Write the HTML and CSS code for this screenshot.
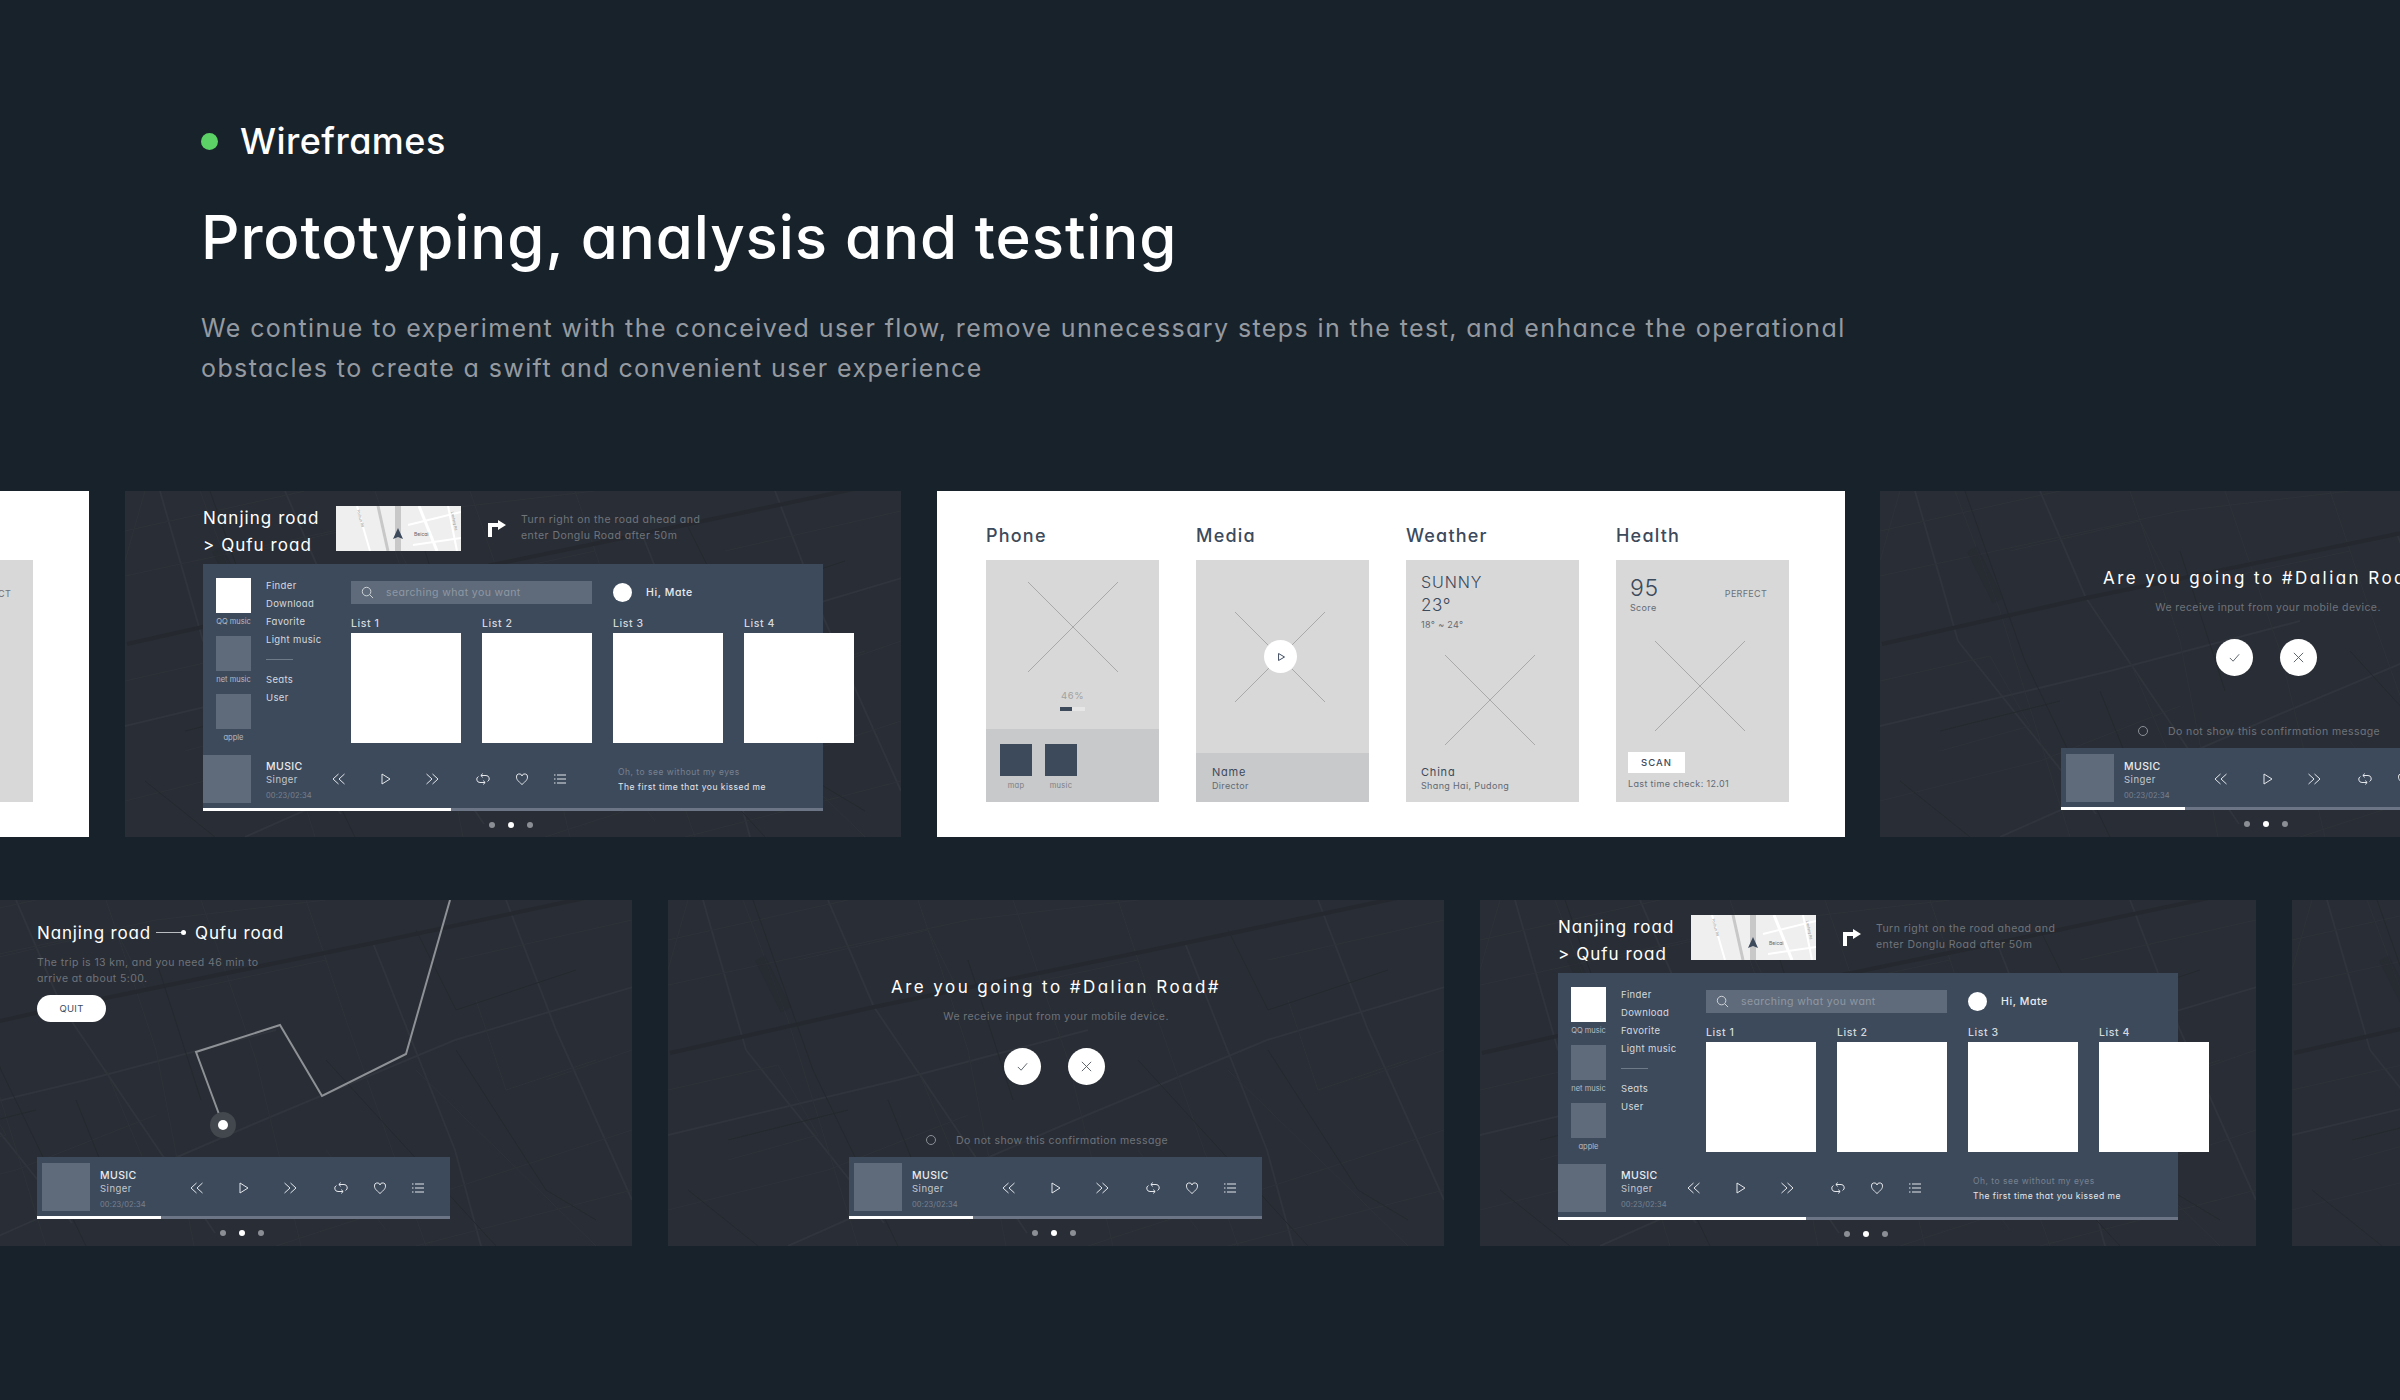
FILE: index.html
```html
<!DOCTYPE html>
<html>
<head>
	<title>Wireframes</title>
	<meta http-equiv="content-type" content="text/html; charset=utf-8" />
	<link rel="stylesheet" href="styles.css">
</head>
<body>

<svg class="defs" width="0" height="0">
	<symbol id="city" viewBox="0 0 776 346">
		<g fill="none" stroke="#30343c" stroke-width="2">
			<path d="M517 43 L599 250 L625 346" />
			<path d="M777 87 L599 140 L400 223 L298 267 L120 346" />
			<path d="M206 107 L359 333" />
			<path d="M78 150 L216 323" />
			<path d="M35 0 L78 150" />
			<path d="M160 0 L206 107" />
			<path d="M0 235 L230 180 L420 130" />
			<path d="M650 0 L700 130 L776 300" />
		</g>
		<g fill="none" stroke="#2e3239" stroke-width="1">
			<path d="M75 0 L120 120 L190 346" />
			<path d="M250 0 L300 150 L338 346" />
			<path d="M345 0 L400 160 L445 346" />
			<path d="M450 0 L490 120 L570 346" />
			<path d="M0 40 L180 0" />
			<path d="M0 85 L300 20 L470 0" />
			<path d="M0 310 L160 270 L300 215" />
			<path d="M420 346 L776 230" />
			<path d="M560 346 L776 290" />
			<path d="M600 60 L776 20" />
			<path d="M560 170 L740 346" />
			<path d="M0 190 L110 165 L150 235 L60 260" />
			<path d="M130 60 L260 30 L290 90" />
			<path d="M330 90 L470 60" />
			<path d="M250 170 L300 290" />
			<path d="M620 100 L650 190 L740 160" />
			<path d="M470 250 L530 330" />
			<path d="M20 0 L0 70" />
			<path d="M690 180 L776 150" />
		</g>
		<g fill="none" stroke="#25292f">
			<path d="M2 153 L206 107 L517 43 L776 -12" stroke-width="4" />
			<path d="M85 0 L145 170 L230 346" stroke-width="1" />
			<path d="M300 60 L345 200" stroke-width="1" />
			<path d="M600 150 L690 290 L740 320" stroke-width="1" />
			<path d="M470 160 L640 346" stroke-width="1" />
			<path d="M60 240 L180 210" stroke-width="1" />
			<path d="M560 30 L600 110 L720 70" stroke-width="1" />
			<path d="M20 290 L90 346" stroke-width="1" />
			<path d="M220 200 L260 300" stroke-width="1" />
			<path d="M92 58 L118 110" stroke-width="11" stroke-opacity="0.4" />
		</g>
	</symbol>
	<symbol id="i-rew" viewBox="0 0 20 20"><path d="M9.5 5 L4 10 L9.5 15 M15.5 5 L10 10 L15.5 15" /></symbol>
	<symbol id="i-play" viewBox="0 0 20 20"><path d="M6 5 L14 10 L6 15 Z" /></symbol>
	<symbol id="i-fwd" viewBox="0 0 20 20"><path d="M4.5 5 L10 10 L4.5 15 M10.5 5 L16 10 L10.5 15" /></symbol>
	<symbol id="i-repeat" viewBox="0 0 20 20"><path d="M8 6.5 H13 a3.2 3.2 0 0 1 1.6 6 M12 13.5 H7 a3.2 3.2 0 0 1 -1.6 -6 M9.8 4.6 L7.8 6.5 L9.8 8.4 M10.2 11.6 L12.2 13.5 L10.2 15.4" /></symbol>
	<symbol id="i-heart" viewBox="0 0 20 20"><path d="M10 15.5 C6 12 4.5 10.5 4.5 8 A2.8 2.8 0 0 1 10 7 A2.8 2.8 0 0 1 15.5 8 C15.5 10.5 14 12 10 15.5 Z" /></symbol>
	<symbol id="i-list" viewBox="0 0 20 20"><path d="M7 6 H16 M7 10 H16 M7 14 H16 M4 6 H5.5 M4 10 H5.5 M4 14 H5.5" /></symbol>
	<symbol id="i-cross" viewBox="0 0 90 90"><path d="M0 0 L90 90 M90 0 L0 90" /></symbol>
</svg>

<div class="page">
	<header class="intro">
		<div class="eyebrow"><span class="eyebrow-dot"></span>Wireframes</div>
		<h1>Prototyping, analysis and testing</h1>
		<p class="lead">
			<span>We continue to experiment with the conceived user flow, remove unnecessary steps in the test, and enhance the operational</span>
			<span>obstacles to create a swift and convenient user experience</span>
		</p>
	</header>

	<section class="row row-one">

		<div class="card white-card stub">
			<div class="stub-tile"><span class="perfect">PERFECT</span></div>
		</div>

		<div class="card dark-card">
			<svg class="city"><use href="#city" /></svg>
			<div class="drive-top">
				<div class="road-names">Nanjing road<br>&gt; Qufu road</div>
				<svg class="thumb" viewBox="0 0 125 45">
					<rect width="125" height="45" fill="#efefef" />
					<g fill="none" stroke="#fff">
						<path d="M21 0 L34 45" stroke-width="2" />
						<path d="M83 0 L101 45" stroke-width="3" />
						<path d="M112 0 L121 45" stroke-width="2" />
						<path d="M72 19 L125 6" stroke-width="2" />
						<path d="M77 39 L125 32" stroke-width="2" />
					</g>
					<path d="M42 0 L52 45" stroke="#c8c8c8" stroke-width="3" />
					<path d="M62 0 V45" stroke="#c8c8c8" stroke-width="6" />
					<path d="M62 22 L67 33 L62 31 L57 33 Z" fill="#3c4a5c" />
					<text x="78" y="30" class="thumb-label">Beicai</text>
					<text transform="translate(21 4) rotate(75)" class="thumb-road">Fanhua Rd</text>
					<text transform="translate(115 6) rotate(78)" class="thumb-road">Lanfang Rd</text>
				</svg>
				<svg class="turn" viewBox="0 0 18 18"><path d="M0 17 V3 H10 V0 L18 5 L10 10 V7 H4 V17 Z" fill="#fff" /></svg>
				<p class="turn-text">Turn right on the road ahead and<br>enter Donglu Road after 50m</p>
			</div>
			<div class="panel">
				<div class="panel-top">
					<div class="apps">
						<div class="app active"></div><span>QQ music</span>
						<div class="app"></div><span>net music</span>
						<div class="app"></div><span>apple</span>
					</div>
					<ul class="menu">
						<li>Finder</li>
						<li>Download</li>
						<li>Favorite</li>
						<li>Light music</li>
						<li class="menu-rule"></li>
						<li>Seats</li>
						<li>User</li>
					</ul>
					<div class="browse">
						<div class="browse-head">
							<div class="search">
								<svg class="search-icon" viewBox="0 0 14 14"><circle cx="6" cy="6" r="4.6" /><path d="M9.4 9.4 L13 13" /></svg>
								searching what you want
							</div>
							<span class="avatar"></span>
							<span class="hello">Hi, Mate</span>
						</div>
						<div class="lists">
							<div class="list"><span>List 1</span><div class="list-box"></div></div>
							<div class="list"><span>List 2</span><div class="list-box"></div></div>
							<div class="list"><span>List 3</span><div class="list-box"></div></div>
							<div class="list"><span>List 4</span><div class="list-box"></div></div>
						</div>
					</div>
				</div>
				<div class="player">
					<div class="album"></div>
					<div class="track"><b>MUSIC</b><span>Singer</span><small>00:23/02:34</small></div>
					<div class="controls">
						<svg class="ico"><use href="#i-rew" /></svg>
						<svg class="ico"><use href="#i-play" /></svg>
						<svg class="ico"><use href="#i-fwd" /></svg>
						<svg class="ico"><use href="#i-repeat" /></svg>
						<svg class="ico"><use href="#i-heart" /></svg>
						<svg class="ico"><use href="#i-list" /></svg>
					</div>
					<div class="lyric"><span>Oh, to see without my eyes</span><span class="lyric-now">The first time that you kissed me</span></div>
				</div>
				<div class="progress"><div style="width:40%"></div></div>
			</div>
			<div class="dots"><i></i><i class="on"></i><i></i></div>
		</div>

		<div class="card white-card">
			<div class="screens">
				<div class="screen">
					<h3>Phone</h3>
					<div class="tile">
						<svg class="cross cross-phone"><use href="#i-cross" /></svg>
						<div class="percent">46%</div>
						<div class="loader"><div style="width:48%"></div></div>
						<div class="band band-phone">
							<div class="shortcut"><div></div><span>map</span></div>
							<div class="shortcut"><div></div><span>music</span></div>
						</div>
					</div>
				</div>
				<div class="screen">
					<h3>Media</h3>
					<div class="tile">
						<svg class="cross cross-media"><use href="#i-cross" /></svg>
						<span class="play-btn"><svg viewBox="0 0 20 20"><path d="M6.5 5 L15 10 L6.5 15 Z" /></svg></span>
						<div class="band band-media">
							<div class="t-name">Name</div>
							<div class="t-sub">Director</div>
						</div>
					</div>
				</div>
				<div class="screen">
					<h3>Weather</h3>
					<div class="tile tile-weather">
						<div class="sunny">SUNNY</div>
						<div class="temp">23°</div>
						<div class="t-sub">18° ~ 24°</div>
						<svg class="cross cross-weather"><use href="#i-cross" /></svg>
						<div class="t-name">China</div>
						<div class="t-sub">Shang Hai, Pudong</div>
					</div>
				</div>
				<div class="screen">
					<h3>Health</h3>
					<div class="tile tile-health">
						<div class="score-row">
							<div><div class="score">95</div><div class="t-sub">Score</div></div>
							<span class="perfect">PERFECT</span>
						</div>
						<svg class="cross cross-health"><use href="#i-cross" /></svg>
						<div class="scan">SCAN</div>
						<div class="t-sub check">Last time check: 12.01</div>
					</div>
				</div>
			</div>
		</div>

		<div class="card dark-card confirm">
			<svg class="city"><use href="#city" /></svg>
			<h2>Are you going to #Dalian Road#</h2>
			<p class="confirm-sub">We receive input from your mobile device.</p>
			<div class="answers">
				<span class="answer"><svg viewBox="0 0 14 14"><path d="M2 7.5 L5.5 11 L12 3.5" /></svg></span>
				<span class="answer"><svg viewBox="0 0 14 14"><path d="M2 2 L12 12 M12 2 L2 12" /></svg></span>
			</div>
			<div class="remember"><i></i>Do not show this confirmation message</div>
			<div class="bar">
				<div class="player">
					<div class="album"></div>
					<div class="track"><b>MUSIC</b><span>Singer</span><small>00:23/02:34</small></div>
					<div class="controls">
						<svg class="ico"><use href="#i-rew" /></svg>
						<svg class="ico"><use href="#i-play" /></svg>
						<svg class="ico"><use href="#i-fwd" /></svg>
						<svg class="ico"><use href="#i-repeat" /></svg>
						<svg class="ico"><use href="#i-heart" /></svg>
						<svg class="ico"><use href="#i-list" /></svg>
					</div>
				</div>
				<div class="progress"><div style="width:30%"></div></div>
			</div>
			<div class="dots"><i></i><i class="on"></i><i></i></div>
		</div>
	</section>

	<section class="row row-two">

		<div class="card dark-card trip">
			<svg class="city"><use href="#city" /></svg>
			<svg class="route" viewBox="0 0 776 346">
				<path d="M594 0 L550 154 L466 196 L424 125 L340 152 L367 225" />
			</svg>
			<div class="trip-head">
				<span>Nanjing road</span>
				<span class="trip-link"></span>
				<span>Qufu road</span>
			</div>
			<p class="trip-text">The trip is 13 km, and you need 46 min to<br>arrive at about 5:00.</p>
			<div class="quit">QUIT</div>
			<span class="pin"></span>
			<div class="bar bar-trip">
				<div class="player">
					<div class="album"></div>
					<div class="track"><b>MUSIC</b><span>Singer</span><small>00:23/02:34</small></div>
					<div class="controls">
						<svg class="ico"><use href="#i-rew" /></svg>
						<svg class="ico"><use href="#i-play" /></svg>
						<svg class="ico"><use href="#i-fwd" /></svg>
						<svg class="ico"><use href="#i-repeat" /></svg>
						<svg class="ico"><use href="#i-heart" /></svg>
						<svg class="ico"><use href="#i-list" /></svg>
					</div>
				</div>
				<div class="progress"><div style="width:30%"></div></div>
			</div>
			<div class="dots"><i></i><i class="on"></i><i></i></div>
		</div>

		<div class="card dark-card confirm">
			<svg class="city"><use href="#city" /></svg>
			<h2>Are you going to #Dalian Road#</h2>
			<p class="confirm-sub">We receive input from your mobile device.</p>
			<div class="answers">
				<span class="answer"><svg viewBox="0 0 14 14"><path d="M2 7.5 L5.5 11 L12 3.5" /></svg></span>
				<span class="answer"><svg viewBox="0 0 14 14"><path d="M2 2 L12 12 M12 2 L2 12" /></svg></span>
			</div>
			<div class="remember"><i></i>Do not show this confirmation message</div>
			<div class="bar">
				<div class="player">
					<div class="album"></div>
					<div class="track"><b>MUSIC</b><span>Singer</span><small>00:23/02:34</small></div>
					<div class="controls">
						<svg class="ico"><use href="#i-rew" /></svg>
						<svg class="ico"><use href="#i-play" /></svg>
						<svg class="ico"><use href="#i-fwd" /></svg>
						<svg class="ico"><use href="#i-repeat" /></svg>
						<svg class="ico"><use href="#i-heart" /></svg>
						<svg class="ico"><use href="#i-list" /></svg>
					</div>
				</div>
				<div class="progress"><div style="width:30%"></div></div>
			</div>
			<div class="dots"><i></i><i class="on"></i><i></i></div>
		</div>

		<div class="card dark-card">
			<svg class="city"><use href="#city" /></svg>
			<div class="drive-top">
				<div class="road-names">Nanjing road<br>&gt; Qufu road</div>
				<svg class="thumb" viewBox="0 0 125 45">
					<rect width="125" height="45" fill="#efefef" />
					<g fill="none" stroke="#fff">
						<path d="M21 0 L34 45" stroke-width="2" />
						<path d="M83 0 L101 45" stroke-width="3" />
						<path d="M112 0 L121 45" stroke-width="2" />
						<path d="M72 19 L125 6" stroke-width="2" />
						<path d="M77 39 L125 32" stroke-width="2" />
					</g>
					<path d="M42 0 L52 45" stroke="#c8c8c8" stroke-width="3" />
					<path d="M62 0 V45" stroke="#c8c8c8" stroke-width="6" />
					<path d="M62 22 L67 33 L62 31 L57 33 Z" fill="#3c4a5c" />
					<text x="78" y="30" class="thumb-label">Beicai</text>
					<text transform="translate(21 4) rotate(75)" class="thumb-road">Fanhua Rd</text>
					<text transform="translate(115 6) rotate(78)" class="thumb-road">Lanfang Rd</text>
				</svg>
				<svg class="turn" viewBox="0 0 18 18"><path d="M0 17 V3 H10 V0 L18 5 L10 10 V7 H4 V17 Z" fill="#fff" /></svg>
				<p class="turn-text">Turn right on the road ahead and<br>enter Donglu Road after 50m</p>
			</div>
			<div class="panel">
				<div class="panel-top">
					<div class="apps">
						<div class="app active"></div><span>QQ music</span>
						<div class="app"></div><span>net music</span>
						<div class="app"></div><span>apple</span>
					</div>
					<ul class="menu">
						<li>Finder</li>
						<li>Download</li>
						<li>Favorite</li>
						<li>Light music</li>
						<li class="menu-rule"></li>
						<li>Seats</li>
						<li>User</li>
					</ul>
					<div class="browse">
						<div class="browse-head">
							<div class="search">
								<svg class="search-icon" viewBox="0 0 14 14"><circle cx="6" cy="6" r="4.6" /><path d="M9.4 9.4 L13 13" /></svg>
								searching what you want
							</div>
							<span class="avatar"></span>
							<span class="hello">Hi, Mate</span>
						</div>
						<div class="lists">
							<div class="list"><span>List 1</span><div class="list-box"></div></div>
							<div class="list"><span>List 2</span><div class="list-box"></div></div>
							<div class="list"><span>List 3</span><div class="list-box"></div></div>
							<div class="list"><span>List 4</span><div class="list-box"></div></div>
						</div>
					</div>
				</div>
				<div class="player">
					<div class="album"></div>
					<div class="track"><b>MUSIC</b><span>Singer</span><small>00:23/02:34</small></div>
					<div class="controls">
						<svg class="ico"><use href="#i-rew" /></svg>
						<svg class="ico"><use href="#i-play" /></svg>
						<svg class="ico"><use href="#i-fwd" /></svg>
						<svg class="ico"><use href="#i-repeat" /></svg>
						<svg class="ico"><use href="#i-heart" /></svg>
						<svg class="ico"><use href="#i-list" /></svg>
					</div>
					<div class="lyric"><span>Oh, to see without my eyes</span><span class="lyric-now">The first time that you kissed me</span></div>
				</div>
				<div class="progress"><div style="width:40%"></div></div>
			</div>
			<div class="dots"><i></i><i class="on"></i><i></i></div>
		</div>

		<div class="card dark-card">
			<svg class="city"><use href="#city" /></svg>
		</div>
	</section>
</div>

</body>
</html>
```

FILE: styles.css
```css
* {
	box-sizing: border-box;
}

html, body {
	margin: 0;
	padding: 0;
}

body {
	background: #18222b;
	color: #fff;
	font-family: "Inter", "Liberation Sans", sans-serif;
	font-feature-settings: "cv11" 1;
	overflow: hidden;
}

.defs {
	position: absolute;
}

.page {
	width: 2400px;
	height: 1400px;
	overflow: hidden;
}

h1, h2, h3, p, ul {
	margin: 0;
	padding: 0;
	font-weight: 500;
}

/* intro */
.intro {
	padding: 117px 0 0 201px;
	height: 491px;
}

.eyebrow {
	display: flex;
	align-items: center;
	gap: 22px;
	height: 48px;
	font-size: 36px;
	font-weight: 500;
	letter-spacing: 0.45px;
}

.eyebrow-dot {
	width: 17px;
	height: 17px;
	border-radius: 50%;
	background: #5cd166;
}

h1 {
	margin-top: 34px;
	font-size: 60px;
	line-height: 76px;
	font-weight: 500;
	letter-spacing: 0.9px;
}

.lead {
	margin-top: 33px;
	width: 1644px;
	overflow: hidden;
	font-size: 25px;
	line-height: 40px;
	font-weight: 400;
	letter-spacing: 1.4px;
	color: #959aa1;
}

.lead span {
	display: block;
	white-space: nowrap;
}

/* card rows */
.row {
	display: flex;
	gap: 36px;
	height: 346px;
}

.row-one .confirm {
	margin-left: -1px;
}

.row-two {
	margin: 63px 0 0 -144px;
}

.card {
	flex: none;
	height: 346px;
	overflow: hidden;
}

.dark-card {
	position: relative;
	isolation: isolate;
	width: 776px;
	background: #292d35;
}

.city {
	position: absolute;
	left: 0;
	top: 0;
	width: 776px;
	height: 346px;
	z-index: -1;
	filter: blur(0.6px);
}

.white-card {
	width: 908px;
	background: #fff;
	color: #3c4a5c;
}

/* the end of a white card sticking in at the left edge */
.stub {
	width: 89px;
	padding-top: 69px;
}

.stub-tile {
	display: flex;
	justify-content: flex-end;
	width: 33px;
	height: 242px;
	padding: 27px 22px 0 0;
	overflow: hidden;
	background: #d8d8d8;
}

.perfect {
	flex: none;
	font-size: 9px;
	line-height: 14px;
	letter-spacing: 0.3px;
	color: #6c727a;
}

/* drive card */
.drive-top {
	display: flex;
	height: 45px;
	margin: 15px 0 13px 78px;
}

.road-names {
	width: 133px;
	margin-top: -1px;
	font-size: 17px;
	line-height: 27px;
	font-weight: 400;
	letter-spacing: 1.05px;
	white-space: nowrap;
}

.thumb {
	width: 125px;
	height: 45px;
}

.thumb-label {
	font-size: 5px;
	fill: #666;
	font-family: "Inter", sans-serif;
}

.thumb-road {
	font-size: 3.5px;
	fill: #888;
	font-family: "Inter", sans-serif;
}

.turn {
	width: 18px;
	height: 18px;
	margin: 14px 0 0 27px;
}

.turn-text {
	margin: 6px 0 0 15px;
	font-size: 10.5px;
	line-height: 16px;
	font-weight: 400;
	letter-spacing: 0.45px;
	color: #70757c;
	white-space: nowrap;
}

.panel {
	width: 620px;
	margin-left: 78px;
	background: #3d4a5c;
}

.panel-top {
	display: flex;
	height: 191px;
}

.apps {
	flex: none;
	display: flex;
	flex-direction: column;
	align-items: center;
	width: 35px;
	margin: 14px 0 0 13px;
	font-size: 7.5px;
	line-height: 18px;
	color: #b7bdc5;
	white-space: nowrap;
}

.apps span {
	margin-bottom: 5px;
}

.app {
	flex: none;
	width: 35px;
	height: 35px;
	background: #5f6b7a;
}

.app.active {
	background: #fff;
}

.menu {
	flex: none;
	width: 85px;
	margin: 13px 0 0 15px;
	list-style: none;
	font-size: 9.5px;
	line-height: 18px;
	letter-spacing: 0.35px;
	font-weight: 400;
	color: #d5d9de;
	white-space: nowrap;
}

.menu-rule {
	width: 27px;
	height: 1px;
	margin: 10px 0 11px;
	background: #6f7a89;
}

.browse-head {
	display: flex;
	align-items: center;
	height: 23px;
	margin-top: 17px;
}

.search {
	display: flex;
	align-items: center;
	width: 241px;
	height: 23px;
	padding-left: 10px;
	background: #5f6b7a;
	font-size: 10.5px;
	letter-spacing: 0.4px;
	color: #8f98a4;
	white-space: nowrap;
}

.search-icon {
	width: 13px;
	height: 13px;
	margin-right: 12px;
	fill: none;
	stroke: #d5d9de;
	stroke-width: 1;
}

.avatar {
	width: 19px;
	height: 19px;
	margin-left: 21px;
	border-radius: 50%;
	background: #fff;
}

.hello {
	margin-left: 14px;
	font-size: 10.5px;
	font-weight: 500;
	letter-spacing: 0.6px;
	color: #e9ebee;
	white-space: nowrap;
}

.lists {
	display: flex;
	gap: 21px;
	margin-top: 10px;
}

.list {
	flex: none;
	width: 110px;
	font-size: 10.5px;
	line-height: 19px;
	font-weight: 500;
	letter-spacing: 0.6px;
	color: #d5d9de;
}

.list span {
	display: block;
}

.list-box {
	height: 110px;
	background: #fff;
}

/* player */
.player {
	display: flex;
	height: 48px;
	margin-bottom: 5px;
}

.album {
	flex: none;
	width: 48px;
	height: 48px;
	background: #5f6b7a;
}

.track {
	flex: none;
	display: flex;
	flex-direction: column;
	width: 63px;
	margin-left: 15px;
	padding-top: 5px;
	font-size: 9.5px;
	line-height: 13px;
	letter-spacing: 0.5px;
	color: #c3c8cf;
	white-space: nowrap;
}

.track b {
	font-size: 10.5px;
	font-weight: 500;
	letter-spacing: 0.4px;
	color: #e9ebee;
}

.track small {
	margin-top: 4px;
	font-size: 7.5px;
	line-height: 12px;
	letter-spacing: 0.1px;
	color: #77818f;
}

.controls {
	flex: none;
	display: flex;
	align-items: center;
	height: 48px;
}

.ico {
	width: 20px;
	height: 20px;
	fill: none;
	stroke: #e4e7ea;
	stroke-width: 1;
	margin-left: 27px;
}

.ico:first-child {
	margin-left: 0;
}

.ico:nth-child(2) {
	margin-left: 27px;
}

.ico:nth-child(3) {
	margin-left: 26px;
}

.ico:nth-child(4) {
	margin-left: 31px;
}

.ico:nth-child(5) {
	margin-left: 19px;
}

.ico:nth-child(6) {
	margin-left: 18px;
}

.lyric {
	display: flex;
	flex-direction: column;
	margin: 10px 0 0 48px;
	font-size: 8.5px;
	line-height: 15px;
	letter-spacing: 0.5px;
	color: #77818f;
	white-space: nowrap;
}

.lyric-now {
	color: #e4e7ea;
}

.progress {
	height: 3px;
	background: #6b7585;
}

.progress div {
	height: 3px;
	background: #fff;
}

.dots {
	display: flex;
	gap: 13px;
	margin: 11px 0 0 364px;
}

.dots i {
	width: 6px;
	height: 6px;
	border-radius: 50%;
	background: #8b8f95;
}

.dots i.on {
	background: #fff;
}

/* confirm card */
.confirm {
	padding-top: 74px;
}

.confirm h2 {
	font-size: 17px;
	line-height: 27px;
	font-weight: 400;
	letter-spacing: 2.45px;
	text-align: center;
}

.confirm-sub {
	margin-top: 8px;
	font-size: 10.5px;
	line-height: 16px;
	font-weight: 400;
	letter-spacing: 0.4px;
	text-align: center;
	color: #6f747b;
}

.answers {
	display: flex;
	gap: 27px;
	margin: 23px 0 0 336px;
}

.answer {
	display: flex;
	align-items: center;
	justify-content: center;
	width: 37px;
	height: 37px;
	border-radius: 50%;
	background: #fff;
}

.answer svg {
	width: 13px;
	height: 13px;
	fill: none;
	stroke: #555c66;
	stroke-width: 1;
}

.remember {
	display: flex;
	align-items: center;
	height: 14px;
	margin: 48px 0 0 258px;
	font-size: 10.5px;
	letter-spacing: 0.4px;
	color: #6f747b;
	white-space: nowrap;
}

.remember i {
	width: 10px;
	height: 10px;
	margin-right: 20px;
	border: 1.5px solid #8b8f95;
	border-radius: 50%;
}

.bar {
	width: 413px;
	margin: 10px 0 0 181px;
	padding-top: 6px;
	background: #3d4a5c;
}

.bar .album {
	margin-left: 5px;
}

.bar .track {
	width: 87px;
	margin-left: 10px;
	padding-top: 6px;
}

.bar .controls {
	padding-top: 2px;
}

/* trip card */
.route {
	position: absolute;
	left: 0;
	top: 0;
	width: 776px;
	height: 346px;
	fill: none;
	stroke: #8e9296;
	stroke-width: 2;
}

.trip-head {
	display: flex;
	align-items: center;
	height: 27px;
	margin: 19px 0 0 181px;
	font-size: 17px;
	font-weight: 400;
	letter-spacing: 0.85px;
}

.trip-link {
	position: relative;
	width: 30px;
	height: 1px;
	margin: 0 9px 0 5px;
	background: #b9bcc0;
}

.trip-link::after {
	content: "";
	position: absolute;
	right: 0;
	top: -2px;
	width: 5px;
	height: 5px;
	border-radius: 50%;
	background: #fff;
}

.trip-text {
	position: relative;
	margin: 9px 0 0 181px;
	font-size: 10.5px;
	line-height: 16px;
	font-weight: 400;
	letter-spacing: 0.4px;
	color: #6f747b;
}

.quit {
	position: relative;
	width: 69px;
	height: 27px;
	margin: 8px 0 0 181px;
	border-radius: 14px;
	background: #fff;
	color: #3c4a5c;
	font-size: 9.5px;
	line-height: 27px;
	letter-spacing: 0.3px;
	text-align: center;
}

.pin {
	position: absolute;
	left: 354px;
	top: 212px;
	width: 26px;
	height: 26px;
	border-radius: 50%;
	background: #43474e;
}

.pin::after {
	content: "";
	position: absolute;
	left: 8px;
	top: 8px;
	width: 10px;
	height: 10px;
	border-radius: 50%;
	background: #fff;
}

.bar-trip {
	margin-top: 135px;
}

/* white card screens */
.screens {
	display: flex;
	gap: 37px;
	padding: 33px 0 0 49px;
}

.screen {
	flex: none;
	width: 173px;
}

.screen h3 {
	height: 24px;
	margin-bottom: 12px;
	font-size: 18px;
	line-height: 24px;
	letter-spacing: 1.2px;
	color: #3c4a5c;
}

.tile {
	position: relative;
	display: flex;
	flex-direction: column;
	height: 242px;
	background: #d8d8d8;
}

.cross {
	flex: none;
	width: 90px;
	height: 90px;
	fill: none;
	stroke: #a9a9a9;
	stroke-width: 1;
}

.cross-phone {
	margin: 22px 0 0 42px;
}

.cross-media {
	margin: 52px 0 0 39px;
}

.cross-weather {
	margin: 24px 0 20px 24px;
}

.cross-health {
	margin: 27px 0 21px 39px;
}

.percent {
	margin-top: 17px;
	font-size: 9.5px;
	line-height: 14px;
	letter-spacing: 0.6px;
	text-align: center;
	color: #a0a0a0;
}

.loader {
	width: 25px;
	height: 4px;
	margin: 4px 0 0 74px;
	background: #e6e6e6;
}

.loader div {
	height: 4px;
	background: #3c4a5c;
}

.band {
	margin-top: auto;
	background: #c8c9ca;
}

.band-phone {
	display: flex;
	gap: 13px;
	height: 73px;
	padding: 15px 0 0 14px;
}

.shortcut {
	width: 32px;
	font-size: 7.5px;
	line-height: 19px;
	letter-spacing: 0.3px;
	text-align: center;
	color: #7a7f86;
}

.shortcut div {
	height: 32px;
	background: #3c4a5c;
}

.band-media {
	height: 49px;
	padding: 12px 0 0 16px;
}

.t-name {
	font-size: 11px;
	line-height: 14px;
	letter-spacing: 0.8px;
	color: #3c4a5c;
}

.t-sub {
	font-size: 9px;
	line-height: 13px;
	letter-spacing: 0.35px;
	color: #636a74;
}

.play-btn {
	position: absolute;
	left: 68px;
	top: 80px;
	display: flex;
	align-items: center;
	justify-content: center;
	width: 33px;
	height: 33px;
	border-radius: 50%;
	background: #fff;
}

.play-btn svg {
	width: 14px;
	height: 14px;
	fill: none;
	stroke: #3c4a5c;
	stroke-width: 1.4;
}

.tile-weather {
	padding: 11px 0 0 15px;
}

.sunny {
	font-size: 16px;
	line-height: 22px;
	letter-spacing: 0.9px;
	font-weight: 300;
	color: #3c4a5c;
}

.temp {
	font-size: 17px;
	line-height: 25px;
	font-weight: 300;
	letter-spacing: 0.6px;
	color: #3c4a5c;
}

.tile-health {
	padding-top: 15px;
}

.score-row {
	display: flex;
	justify-content: space-between;
	padding: 0 22px 0 14px;
}

.score-row .perfect {
	margin-top: 12px;
}

.score {
	font-size: 23px;
	line-height: 26px;
	font-weight: 300;
	letter-spacing: 0.6px;
	color: #3c4a5c;
}

.scan {
	width: 57px;
	height: 21px;
	margin-left: 12px;
	background: #fff;
	font-size: 9.5px;
	line-height: 21px;
	letter-spacing: 1px;
	font-weight: 500;
	text-align: center;
	color: #3c4a5c;
}

.check {
	margin: 4px 0 0 12px;
}
```
